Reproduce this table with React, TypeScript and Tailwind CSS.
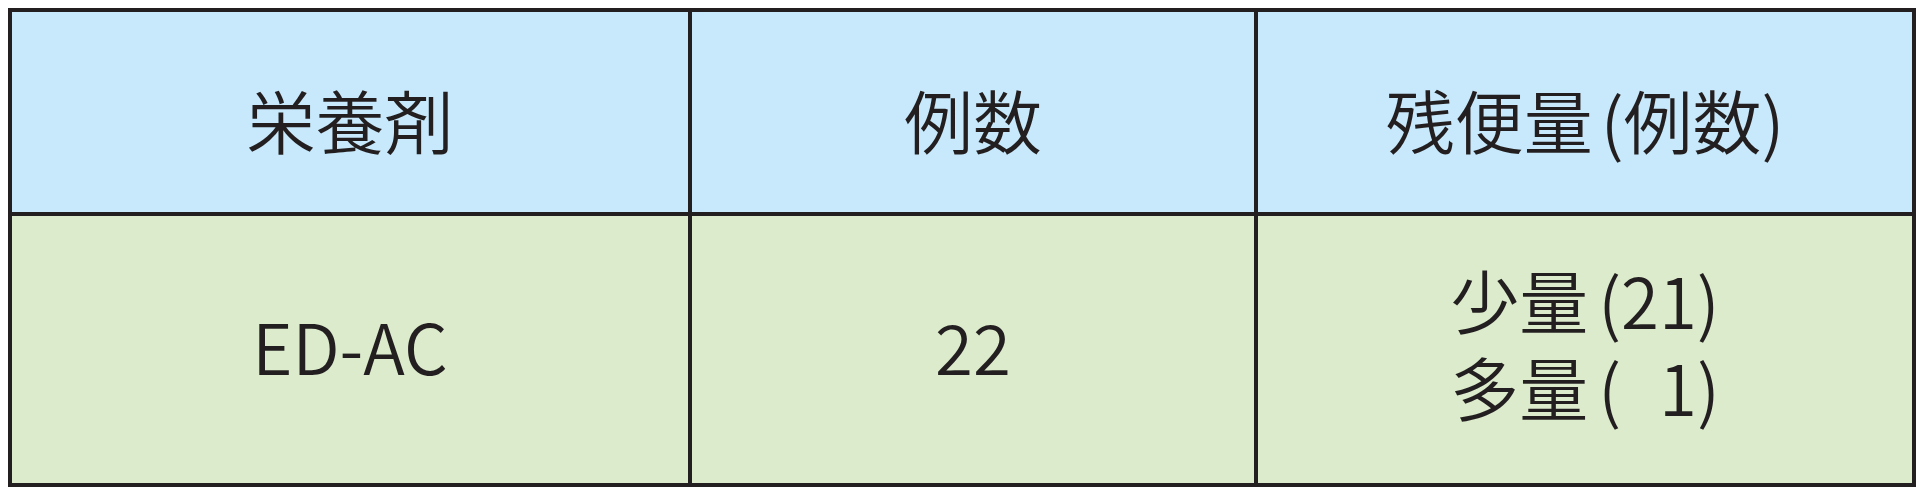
const font = { fontFamily: '"Noto Sans CJK JP", "Noto Sans", sans-serif' };

export default function App() {
  return (
    <div className="w-[1926px] h-[495px] bg-white pt-[8px] pl-[8px]" style={font}>
      <div className="grid grid-cols-[676px_562px_654px] grid-rows-[200px_267px] gap-[4px] p-[4px] bg-[#231f20] w-max text-[#231f20] text-[69px] leading-none font-[350]">
        {/* header */}
        <div className="bg-[#c7e9fb] flex items-center justify-center pt-[14px]">栄養剤</div>
        <div className="bg-[#c7e9fb] flex items-center justify-center pt-[14px]">例数</div>
        <div className="bg-[#c7e9fb] flex items-center justify-center pt-[14px]">
          残便量<span className="ml-[8px]">(例数)</span>
        </div>

        {/* body */}
        <div className="bg-[#dcebcc] flex items-center justify-center pb-[8px]">ED-AC</div>
        <div className="bg-[#dcebcc] flex items-center justify-center pb-[8px]">22</div>
        <div className="bg-[#dcebcc] flex flex-col items-center justify-center gap-[18px] pb-[14px]">
          <div>
            少量<span className="ml-[10px]">(21)</span>
          </div>
          <div>
            多量<span className="ml-[10px]">(<span className="invisible">2</span>1)</span>
          </div>
        </div>
      </div>
    </div>
  );
}
